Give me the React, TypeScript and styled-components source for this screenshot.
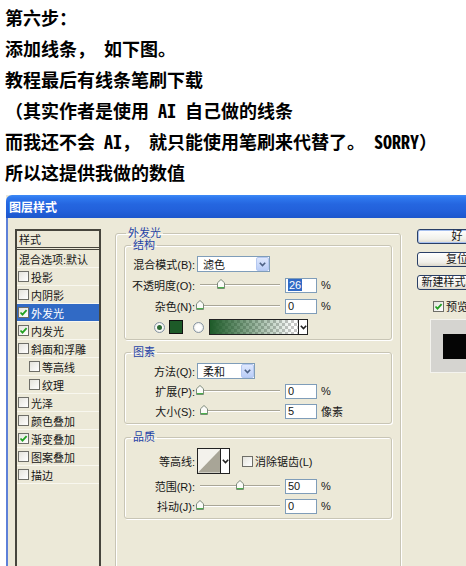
import React from "react";
import styled, { createGlobalStyle } from "styled-components";

const GlobalStyle = createGlobalStyle`
  html, body {
    margin: 0;
    padding: 0;
    background: #fff;
    overflow: hidden;
  }
`;

const Page = styled.div`
  width: 466px;
  height: 566px;
  overflow: hidden;
  background: #fff;
`;

const Notes = styled.div`
  padding: 2px 0 0 5px;
  font-family: "Noto Sans Mono CJK SC", "Noto Sans CJK SC", monospace;
  font-weight: 700;
  font-size: 18px;
  line-height: 31px;
  color: #000;
  white-space: pre;
`;

const Window = styled.div`
  margin: 7px 0 0 6px;
  width: 500px;
  height: 400px;
  background: #ece9d8;
  font-family: "Liberation Sans", "Noto Sans CJK SC", sans-serif;
  font-size: 11px;
  color: #161616;
`;

const TitleBar = styled.div`
  height: 23px;
  display: flex;
  align-items: center;
  padding-left: 3px;
  border-top-left-radius: 6px;
  background: linear-gradient(
    to bottom,
    #3d8af7 0%,
    #2f78ee 12%,
    #2566e0 40%,
    #2260da 70%,
    #1c56cc 100%
  );
  color: #fff;
  font-weight: 700;
  font-size: 12px;
  font-family: "Noto Sans CJK SC", sans-serif;
`;

const Body = styled.div`
  display: flex;
  align-items: flex-start;
  height: 377px;
  padding: 9px 0 0 7px;
  border-left: 2px solid #5d80d8;
`;

const StyleList = styled.div`
  width: 86px;
  height: 340px;
  margin-top: 2px;
  flex-shrink: 0;
  border: 2px solid #46453d;
  box-sizing: border-box;
`;

const ListHeader = styled.div`
  height: 16px;
  display: flex;
  align-items: center;
  padding-left: 2px;
  border-bottom: 3px double #46453d;
`;

const ListRow = styled.div<{ $indent?: boolean; $selected?: boolean; $plain?: boolean }>`
  height: 18px;
  box-sizing: border-box;
  display: flex;
  align-items: center;
  gap: 2px;
  padding-left: ${(p) => (p.$plain ? "2px" : p.$indent ? "12px" : "1px")};
  border-bottom: 1px solid #f8f7ef;
  background: ${(p) => (p.$selected ? "#316ac5" : "transparent")};
  color: ${(p) => (p.$selected ? "#fff" : "#161616")};
  white-space: nowrap;
`;

const CheckBox = styled.span`
  width: 11px;
  height: 11px;
  flex-shrink: 0;
  box-sizing: border-box;
  border: 1px solid #6e6e68;
  background: linear-gradient(135deg, #e4e3dc, #fff);
  display: inline-flex;
  align-items: center;
  justify-content: center;
`;

const Main = styled.fieldset`
  margin: 0 0 0 14px;
  padding: 0 8px;
  width: 286px;
  height: 400px;
  box-sizing: border-box;
  flex-shrink: 0;
  border: 1px solid #c8c5b5;
  border-radius: 3px;
  box-shadow: inset 1px 1px 0 #fff, 1px 1px 0 #fff;
  min-inline-size: 0;
`;

const Group = styled.fieldset<{ $gap: number; $top?: number }>`
  margin: ${(p) => p.$top ?? 0}px 0 0;
  padding: 5px 4px 4px;
  display: flex;
  flex-direction: column;
  gap: ${(p) => p.$gap}px;
  border: 1px solid #c8c5b5;
  border-radius: 3px;
  box-shadow: inset 1px 1px 0 #fff, 1px 1px 0 #fff;
  min-inline-size: 0;
`;

const Legend = styled.legend`
  margin-left: 2px;
  padding: 0 2px;
  line-height: 12px;
  font-size: 11px;
  color: #1f43a6;
`;

const Row = styled.div<{ $h?: number }>`
  height: ${(p) => p.$h ?? 16}px;
  display: flex;
  align-items: center;
  white-space: nowrap;
`;

const Label = styled.span`
  width: 66px;
  flex-shrink: 0;
  text-align: right;
  margin-right: 2px;
`;

const Select = styled.div<{ $w: number }>`
  width: ${(p) => p.$w}px;
  height: 16px;
  box-sizing: border-box;
  border: 1px solid #7f9db9;
  background: #fff;
  display: flex;
  align-items: center;
  justify-content: space-between;
  padding-left: 5px;
`;

const DropArrow = styled.span`
  width: 13px;
  height: 14px;
  box-sizing: border-box;
  border: 1px solid #b5c8f0;
  border-radius: 2px;
  background: linear-gradient(#dfe8fd, #b9cdf7);
  display: flex;
  align-items: center;
  justify-content: center;
`;

const SliderBox = styled.div`
  position: relative;
  width: 84px;
  height: 16px;
  flex-shrink: 0;
`;

const Track = styled.div`
  position: absolute;
  left: 3px;
  right: 1px;
  top: 7px;
  height: 1px;
  background: #a9a697;
  border-bottom: 1px solid #fff;
`;

const Thumb = styled.svg`
  position: absolute;
  top: 2px;
`;

const NumBox = styled.div`
  width: 32px;
  height: 15px;
  margin-left: 4px;
  box-sizing: border-box;
  border: 1px solid #7f9db9;
  background: #fff;
  display: flex;
  align-items: center;
  padding-left: 2px;
  font-size: 11px;
`;

const Picked = styled.span`
  background: #316ac5;
  color: #fff;
  padding: 0 1px;
`;

const Unit = styled.span`
  margin-left: 4px;
`;

const Radio = styled.span<{ $on?: boolean; $ml: number }>`
  width: 11px;
  height: 11px;
  margin-left: ${(p) => p.$ml}px;
  box-sizing: border-box;
  border-radius: 50%;
  border: 1px solid #8593a3;
  background: radial-gradient(circle, #fff 40%, #dcdcd4);
  display: inline-flex;
  align-items: center;
  justify-content: center;
  &::after {
    content: "";
    width: 5px;
    height: 5px;
    border-radius: 50%;
    background: ${(p) => (p.$on ? "#2e6b34" : "transparent")};
  }
`;

const Swatch = styled.span`
  width: 14px;
  height: 14px;
  margin-left: 4px;
  box-sizing: border-box;
  border: 1px solid #111;
  background: #1d5a28;
`;

const GradientPicker = styled.div`
  display: flex;
  margin-left: 5px;
  height: 16px;
  border: 1px solid #222;
  box-sizing: border-box;
`;

const GradientBar = styled.span`
  width: 88px;
  background: linear-gradient(to right, #1d5a28, rgba(29, 90, 40, 0) 95%),
    repeating-conic-gradient(#c8c8c8 0 25%, #fff 0 50%) 0 0 / 6px 6px;
`;

const SmallArrow = styled.span`
  width: 8px;
  border-left: 1px solid #222;
  background: #fff;
  display: flex;
  align-items: center;
  justify-content: center;
`;

const Contour = styled.div`
  display: flex;
  width: 33px;
  height: 26px;
  box-sizing: border-box;
  border: 1px solid #222;
  background: #f3f2ec;
`;

const CheckLabel = styled.label<{ $ml: number }>`
  display: flex;
  align-items: center;
  gap: 2px;
  margin-left: ${(p) => p.$ml}px;
`;

const Side = styled.div`
  margin: 2px 0 0 16px;
  display: flex;
  flex-direction: column;
  align-items: flex-start;
  flex-shrink: 0;
`;

const Button = styled.button<{ $default?: boolean }>`
  width: 80px;
  height: 15px;
  margin-bottom: 8px;
  padding: 0;
  box-sizing: border-box;
  border: 1px solid #2a3f66;
  border-radius: 3px;
  background: linear-gradient(#ffffff, #f1f0ea 70%, #dcd8cb);
  box-shadow: ${(p) => (p.$default ? "inset 0 0 0 1px #a8c1ef" : "none")};
  font: 11px "Liberation Sans", "Noto Sans CJK SC", sans-serif;
  line-height: 13px;
  color: #161616;
  white-space: nowrap;
`;

const Preview = styled.div`
  width: 64px;
  height: 54px;
  margin: 5px 0 0 13px;
  box-sizing: border-box;
  padding: 14px 0 0 12px;
  background: #d5d4d0;
  border: 1px solid #f4f3ee;
`;

const PreviewSquare = styled.div`
  width: 26px;
  height: 25px;
  background: #050505;
`;

const Tick = () => (
  <svg width="9" height="9" viewBox="0 0 9 9">
    <path d="M1.5 4.5 L3.5 6.6 L7.6 2.2" fill="none" stroke="#21a121" strokeWidth="1.8" />
  </svg>
);

const Box = ({ checked }: { checked?: boolean }) => <CheckBox>{checked && <Tick />}</CheckBox>;

const Chevron = ({ color = "#4d6185" }: { color?: string }) => (
  <svg width="7" height="5" viewBox="0 0 7 5">
    <path d="M0.8 0.8 L3.5 3.6 L6.2 0.8" fill="none" stroke={color} strokeWidth="1.6" />
  </svg>
);

const Slider = ({ value, max }: { value: number; max: number }) => (
  <SliderBox>
    <Track />
    <Thumb width="8" height="10" viewBox="0 0 8 10" style={{ left: 3 + (value / max) * 80 - 4 }}>
      <polygon points="0.5,3.8 4,0.5 7.5,3.8 7.5,9.5 0.5,9.5" fill="#fbfbf8" stroke="#7d8a7b" strokeWidth="1" />
      <line x1="1" y1="8.6" x2="7" y2="8.6" stroke="#4bb04b" strokeWidth="1.2" />
    </Thumb>
  </SliderBox>
);

const layerStyles = [
  { label: "投影" },
  { label: "内阴影" },
  { label: "外发光", checked: true, selected: true },
  { label: "内发光", checked: true },
  { label: "斜面和浮雕" },
  { label: "等高线", indent: true },
  { label: "纹理", indent: true },
  { label: "光泽" },
  { label: "颜色叠加" },
  { label: "渐变叠加", checked: true },
  { label: "图案叠加" },
  { label: "描边" },
];

const noteLines = [
  "第六步：",
  "添加线条， 如下图。",
  "教程最后有线条笔刷下载",
  "（其实作者是使用 AI 自己做的线条",
  "而我还不会 AI， 就只能使用笔刷来代替了。 SORRY）",
  "所以这提供我做的数值",
];

export default function App() {
  return (
    <Page>
      <GlobalStyle />
      <Notes>
        {noteLines.map((line) => (
          <div key={line}>{line}</div>
        ))}
      </Notes>

      <Window>
        <TitleBar>图层样式</TitleBar>
        <Body>
          <StyleList>
            <ListHeader>样式</ListHeader>
            <ListRow $plain>混合选项:默认</ListRow>
            {layerStyles.map((s) => (
              <ListRow key={s.label} $indent={s.indent} $selected={s.selected}>
                <Box checked={s.checked} />
                {s.label}
              </ListRow>
            ))}
          </StyleList>

          <Main>
            <Legend>外发光</Legend>
            <Group $gap={5}>
              <Legend>结构</Legend>
              <Row>
                <Label>混合模式(B):</Label>
                <Select $w={73}>
                  滤色
                  <DropArrow>
                    <Chevron />
                  </DropArrow>
                </Select>
              </Row>
              <Row>
                <Label>不透明度(O):</Label>
                <Slider value={26} max={100} />
                <NumBox>
                  <Picked>26</Picked>
                </NumBox>
                <Unit>%</Unit>
              </Row>
              <Row>
                <Label>杂色(N):</Label>
                <Slider value={0} max={100} />
                <NumBox>0</NumBox>
                <Unit>%</Unit>
              </Row>
              <Row>
                <Radio $on $ml={25} />
                <Swatch />
                <Radio $ml={10} />
                <GradientPicker>
                  <GradientBar />
                  <SmallArrow>
                    <Chevron color="#222" />
                  </SmallArrow>
                </GradientPicker>
              </Row>
            </Group>

            <Group $gap={4} $top={6}>
              <Legend>图素</Legend>
              <Row>
                <Label>方法(Q):</Label>
                <Select $w={58}>
                  柔和
                  <DropArrow>
                    <Chevron />
                  </DropArrow>
                </Select>
              </Row>
              <Row>
                <Label>扩展(P):</Label>
                <Slider value={0} max={100} />
                <NumBox>0</NumBox>
                <Unit>%</Unit>
              </Row>
              <Row>
                <Label>大小(S):</Label>
                <Slider value={5} max={100} />
                <NumBox>5</NumBox>
                <Unit>像素</Unit>
              </Row>
            </Group>

            <Group $gap={4} $top={7}>
              <Legend>品质</Legend>
              <Row $h={26}>
                <Label>等高线:</Label>
                <Contour>
                  <svg width="23" height="24" viewBox="0 0 23 24">
                    <polygon points="0,24 23,0 23,24" fill="#a8a597" />
                  </svg>
                  <SmallArrow>
                    <Chevron color="#222" />
                  </SmallArrow>
                </Contour>
                <CheckLabel $ml={12}>
                  <Box />
                  消除锯齿(L)
                </CheckLabel>
              </Row>
              <Row>
                <Label>范围(R):</Label>
                <Slider value={50} max={100} />
                <NumBox>50</NumBox>
                <Unit>%</Unit>
              </Row>
              <Row>
                <Label>抖动(J):</Label>
                <Slider value={0} max={100} />
                <NumBox>0</NumBox>
                <Unit>%</Unit>
              </Row>
            </Group>
          </Main>

          <Side>
            <Button $default>好</Button>
            <Button>复位</Button>
            <Button>新建样式(W)...</Button>
            <CheckLabel $ml={16}>
              <Box checked />
              预览(V)
            </CheckLabel>
            <Preview>
              <PreviewSquare />
            </Preview>
          </Side>
        </Body>
      </Window>
    </Page>
  );
}
